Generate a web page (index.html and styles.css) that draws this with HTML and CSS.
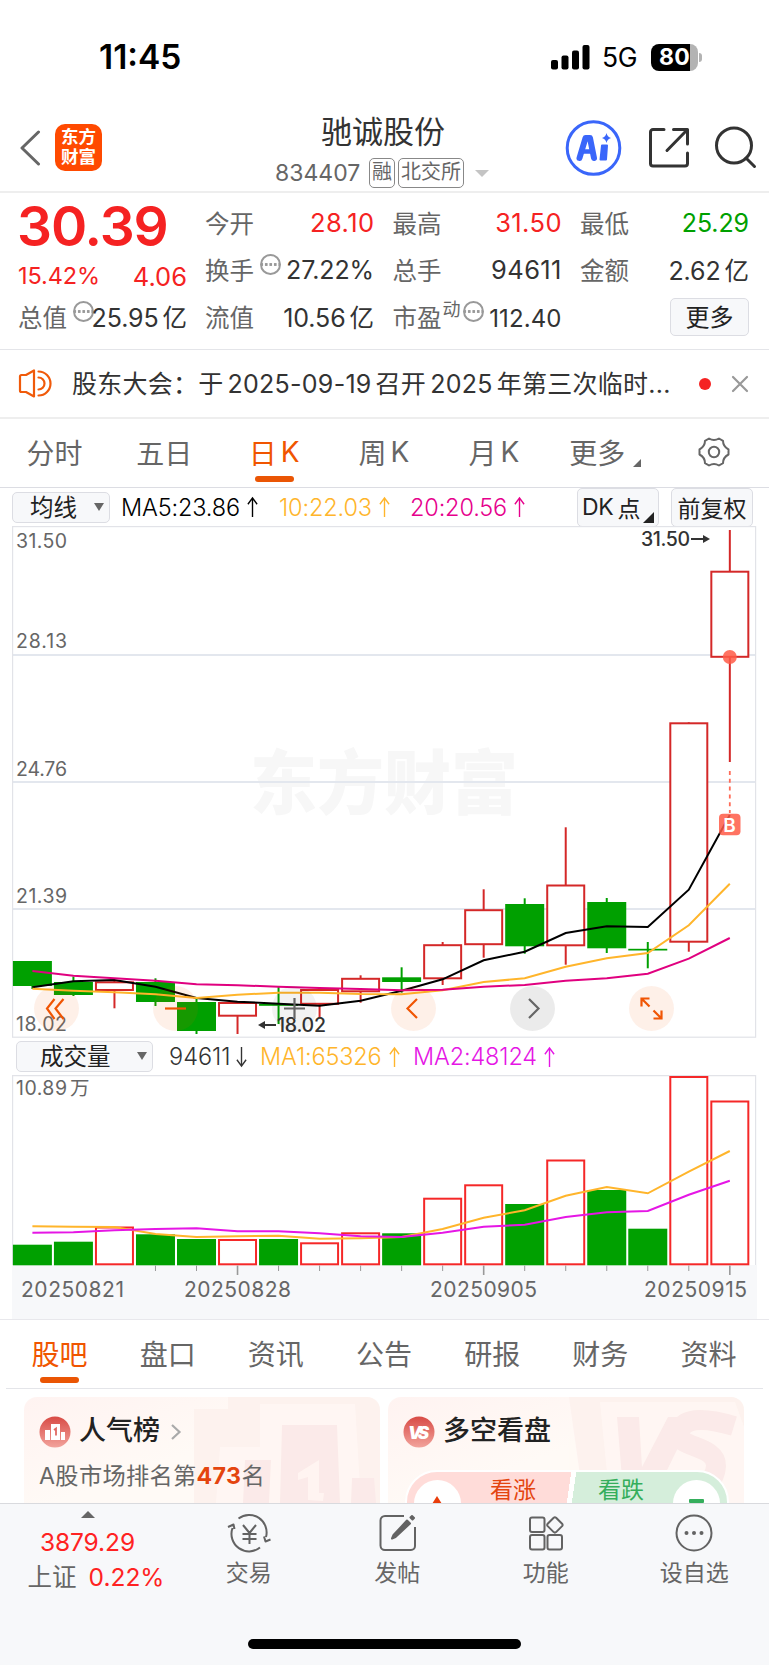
FILE: index.html
```html
<!DOCTYPE html>
<html lang="zh-CN">
<head>
<meta charset="utf-8">
<title>驰诚股份 834407</title>
<link rel="stylesheet" href="styles.css">
</head>
<body>
<div class="page">
  <div class="status">
    <span class="clock">11:45</span>
    <svg class="signal" width="39" height="25" viewBox="0 0 39 25"><rect x="0" y="15" width="7" height="9.500" rx="2"/><rect x="10.500" y="10.500" width="7" height="14" rx="2"/><rect x="21" y="5.500" width="7" height="19" rx="2"/><rect x="31.500" y="0" width="7" height="24.500" rx="2"/></svg>
    <span class="net">5G</span>
    <span class="battery"><span class="level">80</span></span><span class="batt-cap"></span>
  </div>

  <header class="header">
    <svg class="back" width="22" height="36" viewBox="0 0 22 36"><path d="M19.500 2L3 18l16.500 16"/></svg>
    <div class="logo"><span>东方</span><span>财富</span></div>
    <div class="title">
      <h1>驰诚股份</h1>
      <div class="sub"><span class="code">834407</span><span class="tag">融</span><span class="tag">北交所</span><i class="tri-down pale"></i></div>
    </div>
    <svg class="ai" width="56" height="56" viewBox="0 0 56 56"><circle cx="28" cy="28" r="26.300" fill="none" stroke="#3a66fa" stroke-width="3"/><path d="M14 38L20 18h4.500L28.500 38" fill="none" stroke="#3a66fa" stroke-width="6" stroke-linejoin="round"/><path d="M18 31.500h9" stroke="#3a66fa" stroke-width="4.500"/><path d="M36.500 25.500h5l-1 14h-5.500z" fill="#3a66fa" stroke="#3a66fa" stroke-width="2" stroke-linejoin="round"/><path d="M41 13q.8 4 4.500 5-3.700 1-4.500 5-.8-4-4.500-5 3.700-1 4.500-5z" fill="#3a66fa"/></svg>
    <svg class="share" width="42" height="42" viewBox="0 0 42 42"><path d="M16 2.500H5a2.500 2.500 0 0 0-2.500 2.500v31.500A2.500 2.500 0 0 0 5 39h32a2.500 2.500 0 0 0 2.500-2.500V26M19 23.500L39 3M25.500 2.500h14v14.500"/></svg>
    <svg class="search" width="44" height="44" viewBox="0 0 44 44"><circle cx="21" cy="20.500" r="17.500"/><path d="M33 33l8.500 8.500"/></svg>
  </header>

  <section class="quote">
    <div class="main">
      <div class="price">30.39</div>
      <div class="chg"><span class="pct">15.42%</span><span>4.06</span></div>
      <div class="cell"><span class="lab">总值<i class="more-dot"></i></span><span class="val">25.95<b>亿</b></span></div>
    </div>
    <div class="cells">
      <div class="cell"><span class="lab">今开</span><span class="val wide red">28.10</span></div>
      <div class="cell"><span class="lab">最高</span><span class="val wide red">31.50</span></div>
      <div class="cell"><span class="lab">最低</span><span class="val green">25.29</span></div>
      <div class="cell"><span class="lab">换手<i class="more-dot"></i></span><span class="val">27.22%</span></div>
      <div class="cell"><span class="lab">总手</span><span class="val wide">94611</span></div>
      <div class="cell"><span class="lab">金额</span><span class="val">2.62<b>亿</b></span></div>
      <div class="cell"><span class="lab">流值</span><span class="val">10.56<b>亿</b></span></div>
      <div class="cell"><span class="lab">市盈<sup>动</sup><i class="more-dot tight"></i></span><span class="val small">112.40</span></div>
      <div class="cell end"><button class="btn more">更多</button></div>
    </div>
  </section>

  <section class="notice">
    <svg width="34" height="30" viewBox="0 0 34 30"><path d="M2 7.500Q2 6 3.500 6H8l8-4.500v26L8 23H3.500Q2 23 2 21.500zM20.500 2.500a12 12 0 0 1 0 24M20.500 8.500a6 6 0 0 1 0 12"/></svg>
    <span class="msg">股东大会：<span class="gap"></span>于<em>2025-09-19</em>召开<em>2025</em>年第三次临时...</span>
    <i class="dot"></i>
    <svg class="close" width="18" height="18" viewBox="0 0 18 18"><path d="M2 2l14 14M16 2L2 16"/></svg>
  </section>

  <nav class="tabs period">
    <a>分时</a><a>五日</a><a class="on">日<em>K</em></a><a>周<em>K</em></a><a>月<em>K</em></a><a class="rest">更多<i class="corner"></i></a>
    <a><svg class="gear" width="34" height="32" viewBox="0 0 34 32"><path d="M12 2.500Q17 5.500 22 2.500L26 4.800Q26 10.500 31.500 13.500V18.500Q26 21.500 26 27.200L22 29.500Q17 26.500 12 29.500L8 27.200Q8 21.500 2.500 18.500V13.500Q8 10.500 8 4.800z"/><circle cx="17" cy="16" r="5.200"/></svg></a>
  </nav>

  <div class="ma">
    <button class="btn drop avg">均线<i class="tri-down"></i></button>
    <span class="m5">MA5:23.86<svg class="arr" viewBox="0 0 12 22"><path d="M6 22V1.500M1 8l5-7 5 7"/></svg></span>
    <span class="m10">10:22.03<svg class="arr" viewBox="0 0 12 22"><path d="M6 22V1.500M1 8l5-7 5 7"/></svg></span>
    <span class="m20">20:20.56<svg class="arr" viewBox="0 0 12 22"><path d="M6 22V1.500M1 8l5-7 5 7"/></svg></span>
    <button class="btn tall dk">DK<em>点</em><i class="corner dark"></i></button>
    <button class="btn tall fq">前复权</button>
  </div>

  <div class="chart kline"><svg id="kline" width="745" height="512" viewBox="12 526 745 512"></svg>
    <div class="tools">
      <span class="tool"><svg viewBox="0 0 45 45"><path d="M20.500 13L13 22.500 20.500 33M29.500 13L21.500 22.500 29.500 33"/></svg></span>
      <span class="tool"><svg viewBox="0 0 45 45"><path d="M12 22.500h21"/></svg></span>
      <span class="tool off"><svg viewBox="0 0 45 45"><path d="M12 22.500h21M22.500 12v21"/></svg></span>
      <span class="tool"><svg viewBox="0 0 45 45"><path d="M26 13L16.500 22.500 26 32"/></svg></span>
      <span class="tool off solid"><svg viewBox="0 0 45 45"><path d="M19 13l9.500 9.500L19 32"/></svg></span>
      <span class="tool"><svg viewBox="0 0 45 45"><path d="M20.500 12.500h-8v8M12.500 12.500l8 8M24.500 32.500h8v-8M32.500 32.500l-8-8"/></svg></span>
    </div>
  </div>

  <div class="ma vol">
    <button class="btn drop volb">成交量<i class="tri-down"></i></button>
    <span class="v0">94611<svg class="arr" viewBox="0 0 12 22"><path d="M6 0v20.500M1 14l5 7 5-7"/></svg></span>
    <span class="v1">MA1:65326<svg class="arr" viewBox="0 0 12 22"><path d="M6 22V1.500M1 8l5-7 5 7"/></svg></span>
    <span class="v2">MA2:48124<svg class="arr" viewBox="0 0 12 22"><path d="M6 22V1.500M1 8l5-7 5 7"/></svg></span>
  </div>

  <div class="chart volume"><svg id="volume" width="745" height="244" viewBox="12 1075 745 244"></svg></div>

  <div class="info-wrap">
  <nav class="tabs info">
    <a class="on">股吧</a><a>盘口</a><a>资讯</a><a>公告</a><a>研报</a><a>财务</a><a>资料</a>
  </nav>
  </div>

  <section class="cards">
    <div class="card">
      <svg class="art" width="356" height="106" viewBox="0 0 356 106"><path d="M170 12h34V0h152v106H170z" fill="#fdf0ed"/><path d="M196 50h40V7h95l6 99H192z" fill="#fff6f3"/><path d="M258 28h55l3 78h-60zM221 63h26l-2 43h-26zM328 81h22l2 25h-25z" fill="#fbe7e6"/><path d="M274 76l21-13v33h5l-1 8-15-1V80l-10 3z" fill="#fff3f0"/></svg>
      <div class="head"><svg width="32" height="32" viewBox="0 0 32 32"><defs><linearGradient id="g" x1="0" y1="0" x2="0" y2="1"><stop offset="0" stop-color="#d84b45"/><stop offset="1" stop-color="#f2a39c"/></linearGradient></defs><circle cx="16" cy="16" r="15.500" fill="url(#g)"/><path d="M6 14h5v10H6zM12 8h9v16h-9zM22 16h4v8h-4z" fill="#fff"/><path d="M15 14l2-1.500v7" stroke="#df6962" stroke-width="1.800" fill="none"/></svg><h2>人气榜</h2><svg class="chev" width="12" height="18" viewBox="0 0 12 18"><path d="M2 2l7.500 7L2 16"/></svg></div>
      <p>A股市场排名第<strong>473</strong>名</p>
    </div>
    <div class="card">
      <svg class="art" width="356" height="106" viewBox="0 0 356 106"><path d="M181 0h175v106H196z" fill="#fdf0ed"/><path d="M212 5h135l9 25v76H222z" fill="#fff6f3"/><path d="M229 20h22l3 50 26-50h25l-42 86h-27z" fill="#fbe7e6"/><path d="M346 29q-50-15-55 7c-3 15 38 12 37 33q-2 30-52 20" fill="none" stroke="#fbe7e6" stroke-width="20"/></svg>
      <div class="head"><svg width="32" height="32" viewBox="0 0 32 32"><circle cx="16" cy="16" r="15.500" fill="url(#g)"/><text x="5" y="22.500" class="vs" textLength="21">VS</text></svg><h2>多空看盘</h2></div>
      <div class="vote"><span class="up"><i><svg width="12" height="8" viewBox="0 0 12 8"><path d="M6 0l5 8H1z" fill="#e93c0a"/></svg></i>看涨</span><span class="down">看跌<i><b></b></i></span></div>
    </div>
  </section>

  <footer class="bar">
    <div class="index"><i class="tri-up"></i><span class="pt">3879.29</span><span class="ln">上证<em>0.22%</em></span></div>
    <div class="item"><svg width="46" height="40" viewBox="0 0 46 40"><path d="M12.500 5.500A17.500 17.500 0 0 1 40 24M44.500 26.500L39.500 28.500 38 23.500M34 34.500A17.500 17.500 0 0 1 6.500 15M2 14l5.500-2.500L8.500 16M17 12l6.500 8 6.500-8M23.500 20v11M16.500 21h14M16.500 26h14"/></svg>交易</div>
    <div class="item"><svg width="40" height="40" viewBox="0 0 40 40"><path d="M27 3H8a4.500 4.500 0 0 0-4.500 4.500v25A4.500 4.500 0 0 0 8 37h26a4 4 0 0 0 4-4V14"/><path d="M30 7.500l3 3L18.500 24 15 25.500l1.500-3.500zM35 3l2 2-1.500 1.500-2-2z" fill="#636363"/></svg>发帖</div>
    <div class="item"><svg width="40" height="40" viewBox="0 0 40 40"><rect x="4" y="4.500" width="14.500" height="14.500" rx="2"/><rect x="4" y="22" width="14.500" height="14.500" rx="2"/><rect x="21.500" y="22" width="14.500" height="14.500" rx="2"/><path d="M27.700 4.800q1.200-1 2.400 0l6 5.900q1 1.200 0 2.400l-6 6q-1.200 1-2.400 0l-6-6q-1-1.200 0-2.400z"/></svg>功能</div>
    <div class="item"><svg width="40" height="40" viewBox="0 0 40 40"><circle cx="20" cy="20" r="17.500"/><g fill="#636363" stroke="none"><circle cx="12.500" cy="20" r="2"/><circle cx="20" cy="20" r="2"/><circle cx="27.500" cy="20" r="2"/></g></svg>设自选</div>
    <div class="home"></div>
  </footer>
</div>
<script src="chart.js"></script>
</body>
</html>
```

FILE: styles.css
```css
* { box-sizing: border-box; }
body { margin: 0; background: #fff; font-family: Inter, "Noto Sans CJK SC", sans-serif; color: #333; }
em, i, b { font-style: normal; font-weight: inherit; }
h1, h2, p { margin: 0; }
.page { width: 769px; height: 1665px; overflow: hidden; display: flex; flex-direction: column; }
.page > * { flex: none; }
svg { flex: none; }

/* status bar */
.status { height: 106px; padding-top: 8px; display: flex; align-items: center; color: #000; }
.clock { margin-left: 99px; width: 452px; font-size: 33.5px; font-weight: 600; letter-spacing: 0; }
.net { margin-left: 12px; width: 49px; font-size: 26.5px; font-weight: 400; letter-spacing: -0.3px; }
.battery { width: 47px; height: 27px; border-radius: 8px; background: linear-gradient(90deg, #000 39px, #b3b3b3 39px); display: flex; }
.level { color: #fff; font-size: 23px; font-weight: 700; line-height: 27px; padding-left: 8px; letter-spacing: 0.4px; }
.batt-cap { width: 3px; height: 9px; margin-left: 1px; border-radius: 0 4px 4px 0; background: #b3b3b3; }

/* header */
.header { height: 87px; border-bottom: 2px solid #eee; display: flex; align-items: flex-start; }
.header > svg { fill: none; stroke-linecap: round; stroke-linejoin: round; }
.back { margin: 24px 0 0 19px; stroke: #666; stroke-width: 3; }
.logo { margin: 18px 0 0 14px; width: 47px; height: 47px; border-radius: 10px; background: #ff4a00; color: #fff; font-weight: 700; font-size: 17.5px; line-height: 20px; display: flex; flex-direction: column; align-items: center; padding-top: 3px; }
.title { margin-left: 164px; width: 234px; text-align: center; }
.title h1 { font-weight: 400; font-size: 31px; line-height: 42px; margin-top: 5px; }
.sub { display: flex; align-items: center; height: 30px; margin-top: 5px; padding-left: 9px; color: #666; }
.code { font-size: 23px; width: 94px; text-align: left; }
.tag { border: 1.5px solid #888; border-radius: 5px; font-size: 20px; line-height: 27px; height: 30px; padding: 0 2px; margin-right: 3px; }
.tri-down { width: 0; height: 0; border: 5px solid transparent; border-top: 8px solid #666; border-bottom: 0; }
.tri-down.pale { border-width: 7px 7px 0; border-top-color: #c4c4c4; margin-left: 8px; }
.ai { margin: 14px 0 0 65px; width: 57px; }
.share { margin: 21px 0 0 26px; stroke: #333; stroke-width: 3; }
.search { margin: 19px 0 0 23px; stroke: #333; stroke-width: 3; }

/* quote */
.quote { height: 157px; border-bottom: 1.5px solid #e4e5e9; padding: 6px 20px 0 18px; display: flex; justify-content: space-between; }
.main { width: 169px; }
.price { color: #f52222; font-weight: 600; font-size: 55px; line-height: 54px; height: 54px; letter-spacing: -1.1px; margin-left: -1px; }
.chg { display: flex; justify-content: space-between; color: #f52222; font-size: 25.5px; height: 40px; line-height: 48px; }
.pct { font-size: 23.5px; line-height: 46px; letter-spacing: -0.1px; }
.cells { display: grid; grid-template-columns: 169px 169px 169px; column-gap: 18.5px; grid-auto-rows: 47px; }
.cell { display: flex; justify-content: space-between; align-items: center; height: 47px; white-space: nowrap; }
.cell.end { justify-content: flex-end; }
.lab { font-size: 24.5px; color: #666; display: flex; align-items: center; }
.val { font-size: 25px; color: #333; letter-spacing: -0.1px; }
.val.wide { font-size: 25.5px; letter-spacing: 0.4px; margin-right: -0.4px; }
.main .val { margin-left: -10px; }
.val b { font-size: 24.5px; margin-left: 4px; }
.val.small { font-size: 24px; padding-top: 3px; letter-spacing: 0.1px; }
.val.red { color: #f52222; } .val.green { color: #00a000; }
.lab sup { font-size: 18px; line-height: 18px; margin: -14px 0 0 1px; }
.more-dot { width: 21px; height: 21px; border: 2px solid #999; border-radius: 50%; margin: -10px 0 0 6px; background: radial-gradient(circle, #999 1.3px, transparent 1.8px) 2px 6px / 4.500px 5px repeat-x; }
.more-dot.tight { margin-left: 2px; }
.btn { font: 400 24px Inter, "Noto Sans CJK SC", sans-serif; color: #222; background: #f7f8fa; border: 1.5px solid #dcdde3; border-radius: 5px; padding: 0; display: flex; align-items: center; position: relative; }
.more { width: 79px; height: 38px; justify-content: center; padding-bottom: 3px; }

/* notice */
.notice { height: 69px; border-bottom: 2px solid #eee; display: flex; align-items: center; padding-left: 18px; font-size: 25px; }
.notice svg { fill: none; stroke: #f05a0a; stroke-width: 2.200; stroke-linejoin: round; stroke-linecap: round; }
.msg { margin-left: 20px; width: 627px; white-space: nowrap; letter-spacing: 0.26px; padding-bottom: 3px; }
.msg em { margin: 0 4px; }
.dot { width: 12px; height: 12px; border-radius: 50%; background: #f52222; }
.notice .close { margin-left: 20px; stroke: #999; }

/* tabs */
.tabs { display: grid; grid-template-columns: repeat(7, 1fr); font-size: 28px; color: #666; }
.tabs a { display: flex; align-items: center; justify-content: center; position: relative; padding: 0 1px 2px 0; }
.tabs em { margin-left: 4px; }
.tabs .on { color: #f05500; }
.tabs .on::after { content: ""; position: absolute; bottom: 5.500px; left: calc(50% - 20px); width: 39px; height: 6px; border-radius: 3px; background: #ea5504; }
.tabs .rest { padding-left: 3px; }
.period { height: 69px; border-bottom: 1.5px solid #dcdde3; }
.corner { width: 0; height: 0; border-left: 8px solid transparent; border-bottom: 8px solid #666; margin: 21px 0 0 8px; }
.gear { fill: none; stroke: #666; stroke-width: 2; stroke-linejoin: round; }
.info-wrap { height: 69px; padding: 0 6px; box-shadow: 0 -1px 0 #e8e8ec; }
.info { height: 69px; border-bottom: 1.5px solid #e4e5e9; }

/* indicator rows */
.ma { height: 38px; display: flex; align-items: center; padding-left: 12px; font-size: 23.5px; font-weight: 300; letter-spacing: -0.15px; white-space: nowrap; }
.ma > span { display: flex; align-items: center; }
.arr { width: 11px; height: 22px; fill: none; stroke: currentColor; stroke-width: 1.500; margin-left: 7px; }
.drop { height: 31px; justify-content: space-between; padding: 0 5px 3px 17px; font-size: 23.5px; }
.drop .tri-down { margin-top: 2px; }
.avg { width: 98px; }
.m5 { margin-left: 11px; width: 158px; color: #000; }
.m10, .v1 { color: #ffb52b; }
.m10 { width: 131px; }
.m20 { color: #e6008c; width: 167px; }
.tall { height: 39px; justify-content: center; font-size: 23px; margin-top: 1px; padding-bottom: 2px; }
.dk { width: 82px; padding-right: 14px; letter-spacing: -0.3px; }
.dk em { margin-left: 4px; }
.corner.dark { position: absolute; right: 4px; bottom: 3px; margin: 0; border-left-width: 11px; border-bottom: 11px solid #222; }
.fq { width: 82px; margin-left: 12px; }
.vol { padding-left: 16px; padding-top: 1px; }
.volb { width: 137px; padding-left: 23px; }
.v0 { margin-left: 16px; width: 91px; letter-spacing: 0; }
.v0 .arr { margin-left: 5px; }
.v1 { width: 153px; }
.v2 { color: #e516e5; }

/* charts */
.chart { margin-left: 12px; width: 745px; position: relative; }
.chart > svg { display: block; }
.kline { height: 511px; }
.volume { height: 245px; }
.tools { position: absolute; left: 21.5px; top: 460px; display: flex; gap: 74.2px; }
.tool { width: 45px; height: 45px; border-radius: 50%; background: rgba(240, 85, 4, 0.09); }
.tool svg { display: block; fill: none; stroke: #f05504; stroke-width: 2.200; }
.tool.off { background: rgba(0, 0, 0, 0.05); }
.tool.off svg { stroke: #666; }
.tool.solid { background: rgba(0, 0, 0, 0.08); }

/* cards */
.cards { height: 114px; padding: 8px 25px 0 24px; display: flex; justify-content: space-between; overflow: hidden; }
.card { width: 356px; height: 130px; border-radius: 13px; background: linear-gradient(160deg, #fff3f1, #fffaf6 45%); position: relative; overflow: hidden; padding-left: 15px; }
.art { position: absolute; left: 0; top: 0; opacity: 0.8; }
.head { position: relative; display: flex; align-items: center; padding-top: 15px; height: 54px; }
.head h2 { font-size: 27px; line-height: 34px; font-weight: 500; color: #222; margin-left: 8px; padding-bottom: 2px; }
.chev { margin-left: 10px; fill: none; stroke: #aaa; stroke-width: 2.200; }
.vs { font: italic 900 17px Inter, sans-serif; fill: #fff; }
.card p { position: relative; font-size: 23.2px; color: #666; margin-top: 6px; letter-spacing: 0.35px; }
.card strong { color: #e4450f; font-weight: 700; }
.vote { position: relative; margin-top: 19px; margin-left: 2px; height: 64px; width: 324px; border: 2px solid #fff; border-radius: 32px; overflow: hidden; display: flex; font-size: 23px; line-height: 24px; background: linear-gradient(98deg, #ffdcd9 50%, #fff 50%, #fff 51.5%, #d5eedb 51.5%); }
.vote span { width: 50%; display: flex; padding-top: 6px; }
.vote i { width: 47px; height: 47px; border-radius: 50%; background: #fff; margin-top: 2px; flex: none; }
.vote .up { color: #e4450f; padding-left: 7px; gap: 29px; }
.up i svg { display: block; margin: 16px 0 0 17px; }
.vote .down { color: #35ae5c; justify-content: flex-end; padding-right: 7px; gap: 29px; }
.down b { display: block; width: 15px; height: 4px; background: #35ae5c; margin: 19px 0 0 16px; border-radius: 1px; }

/* bottom bar */
.bar { height: 162px; background: #f7f8fa; border-top: 1.5px solid #d9dade; display: flex; position: relative; z-index: 1; }
.index { width: 175px; display: flex; flex-direction: column; align-items: center; color: #ff2222; font-size: 24.5px; }
.tri-up { width: 0; height: 0; border: 7px solid transparent; border-bottom-color: #666; border-top: 0; margin-top: 7px; }
.pt { line-height: 34px; margin-top: 7px; letter-spacing: -0.1px; }
.ln { color: #666; line-height: 36px; margin-left: 17px; }
.ln em { color: #ff2222; margin-left: 12px; letter-spacing: 0; }
.item { width: 148.5px; display: flex; flex-direction: column; align-items: center; font-size: 23px; line-height: 34px; color: #666; padding: 9px 1px 0 0; }
.item svg { fill: none; stroke: #636363; stroke-width: 2; stroke-linejoin: round; margin-bottom: 3px; }
.home { position: absolute; left: 248px; bottom: 16px; width: 273px; height: 10px; border-radius: 5px; background: #000; }

/* chart drawing */
.frame { fill: none; stroke: #e2e3e8; stroke-width: 1.200; }
.grid { stroke: #e3e7ee; stroke-width: 2; }
.axis { font-size: 19.5px; fill: #666; }
.date { font-size: 21px; fill: #666; }
.mark { font-size: 19.5px; font-weight: 500; fill: #333; }
.water { font-family: "Noto Sans CJK SC", sans-serif; font-weight: 900; font-size: 70px; fill: #f7f7f7; }
.ab { font-weight: 600; font-size: 19px; fill: #fff; }
```

FILE: chart.js
```js
var STEP = 41.025, X0 = 32.4;
var RED = '#d42828', GREEN = '#00a000';

// type, body top, body bottom, wick top, wick bottom
var candles = [
  ['g', 961, 986, 961, 989], ['g', 982, 995, 976.5, 996], ['r', 981.3, 991, 981, 1008.3],
  ['g', 982, 1002, 978.3, 1006], ['g', 1002, 1031, 998, 1034], ['r', 1002, 1016.7, 1002, 1034],
  ['g', 1004, 1005.8, 987, 1024], ['r', 989, 1004.8, 989, 1018], ['r', 977.8, 992.3, 975.3, 1002.7],
  ['g', 977.3, 982, 967.3, 992.7], ['r', 944.2, 979.3, 942, 985], ['r', 909.2, 945.2, 889.3, 957.7],
  ['g', 904, 946.3, 898.3, 953.7], ['r', 884.5, 946.3, 827.3, 964.7], ['g', 902, 948.3, 898, 953],
  ['g', 948.8, 950.5, 942, 968.3], ['r', 722.3, 942.7, 722.3, 951.7], ['r', 570.7, 657.8, 530, 762]
];
var ma5 = [987.3, 981.3, 980, 986.7, 998, 1001.7, 1003.7, 1005.7, 1000.7, 990.7, 979.3, 960.3, 951.7, 933, 926.3, 927, 889.7, 815];
var ma10 = [988.7, 990.7, 992.3, 994.3, 998, 994.7, 992.7, 992.7, 994, 994.3, 990.3, 982, 978.3, 966.7, 958.3, 953, 925.3, 883.7];
var ma20 = [971, 975.7, 978.3, 980.7, 984.3, 985.3, 986.7, 988, 989, 990.3, 989.7, 986.7, 985, 980.7, 978.3, 973.7, 958.7, 938];
var volTop = [1244.7, 1241.7, 1226.5, 1234.3, 1239, 1239, 1239, 1242.3, 1232.3, 1233.3, 1197.7, 1184.3, 1204, 1159.5, 1190, 1228.7, 1076, 1100.5];
var vma1 = [1226.3, 1226.8, 1227, 1234, 1237, 1236.3, 1235.7, 1238.7, 1238.3, 1237, 1229, 1217.7, 1210.3, 1195.7, 1187, 1193.3, 1171.7, 1151];
var vma2 = [1232.7, 1232.3, 1230.3, 1229, 1228.3, 1231.3, 1231.3, 1233.3, 1236.3, 1237, 1232.7, 1226.7, 1224.7, 1217, 1212.3, 1211, 1194.7, 1180.7];

function cx(i) { return X0 + i * STEP; }
function curve(values, color) {
  var pts = values.map(function (y, i) { return cx(i).toFixed(1) + ',' + y; }).join(' ');
  return '<polyline points="' + pts + '" fill="none" stroke="' + color + '" stroke-width="2"/>';
}
function body(type, i, top, bottom, color) {
  var x = cx(i) - 19.5;
  if (type === 'g') return '<rect x="' + x + '" y="' + top + '" width="39" height="' + (bottom - top) + '" fill="' + GREEN + '"/>';
  return '<rect x="' + (x + 1) + '" y="' + (top + 1) + '" width="37" height="' + (bottom - top - 2) + '" fill="#fff" stroke="' + color + '" stroke-width="2"/>';
}
function text(cls, x, y, str, len) {
  return '<text class="' + cls + '" x="' + x + '" y="' + y + '" textLength="' + len + '">' + str + '</text>';
}

var k = text('water', 250, 809, '东方财富', 268).replace('textLength', 'lengthAdjust="spacingAndGlyphs" textLength');
[655, 782, 909].forEach(function (y) { k += '<line class="grid" x1="12" x2="756" y1="' + y + '" y2="' + y + '"/>'; });
k += '<rect class="frame" x="12.6" y="526.6" width="743" height="510.600"/>';
candles.forEach(function (c, i) {
  k += '<line x1="' + cx(i) + '" x2="' + cx(i) + '" y1="' + c[3] + '" y2="' + c[4] + '" stroke="' + (c[0] === 'g' ? GREEN : RED) + '" stroke-width="2"/>';
  k += body(c[0], i, c[1], c[2], RED);
});
k += curve(ma5, '#000') + curve(ma10, '#ffb52b') + curve(ma20, '#e0007f');
k += text('axis', 16, 548, '31.50', 51) + text('axis', 16, 648, '28.13', 51) + text('axis', 16, 776, '24.76', 51) +
     text('axis', 16, 903, '21.39', 51) + text('axis', 16, 1031, '18.02', 51);
k += text('mark', 641, 546, '31.50', 49) + '<path d="M691 539h13" stroke="#333" stroke-width="2"/><path d="M703 535l7 4-7 4z" fill="#333"/>';
k += text('mark', 277, 1032, '18.02', 49) + '<path d="M264 1025h12" stroke="#333" stroke-width="2"/><path d="M265 1021l-7 4 7 4z" fill="#333"/>';
k += '<circle cx="729.8" cy="657" r="7" fill="#ff5a46" opacity=".85"/>';
k += '<line x1="729.8" x2="729.8" y1="771" y2="813" stroke="#ff6b57" stroke-width="1.8" stroke-dasharray="4 3.8"/>';
k += '<rect x="719" y="813.700" width="21.500" height="21.500" rx="4" fill="#ff5a46" opacity=".85"/>' + text('ab', 723.3, 831.5, 'B', 13);
document.getElementById('kline').innerHTML = k;

var v = '<rect x="12" y="1265" width="745" height="54" fill="#f7f8fa"/><path class="frame" d="M12.600 1265V1075.600H755.600V1265"/>';
candles.forEach(function (c, i) { v += body(c[0], i, volTop[i], 1265.3, '#f52828'); });
v += curve(vma1, '#ffb52b') + curve(vma2, '#e516e5');
for (var i = 3; i < 18; i++) {
  var major = i % 6 === 5;
  v += '<line x1="' + cx(i) + '" x2="' + cx(i) + '" y1="1265.5" y2="' + (major ? 1275 : 1271) + '" stroke="#999" stroke-width="' + (major ? 1.6 : 1) + '"/>';
}
v += text('axis', 16, 1095, '10.89', 51) + text('axis', 70, 1095, '万', 18);
v += text('date', 21, 1296.5, '20250821', 103) + text('date', 184, 1296.5, '20250828', 107) +
     text('date', 430, 1296.5, '20250905', 107) + text('date', 644, 1296.5, '20250915', 103);
document.getElementById('volume').innerHTML = v;
```
